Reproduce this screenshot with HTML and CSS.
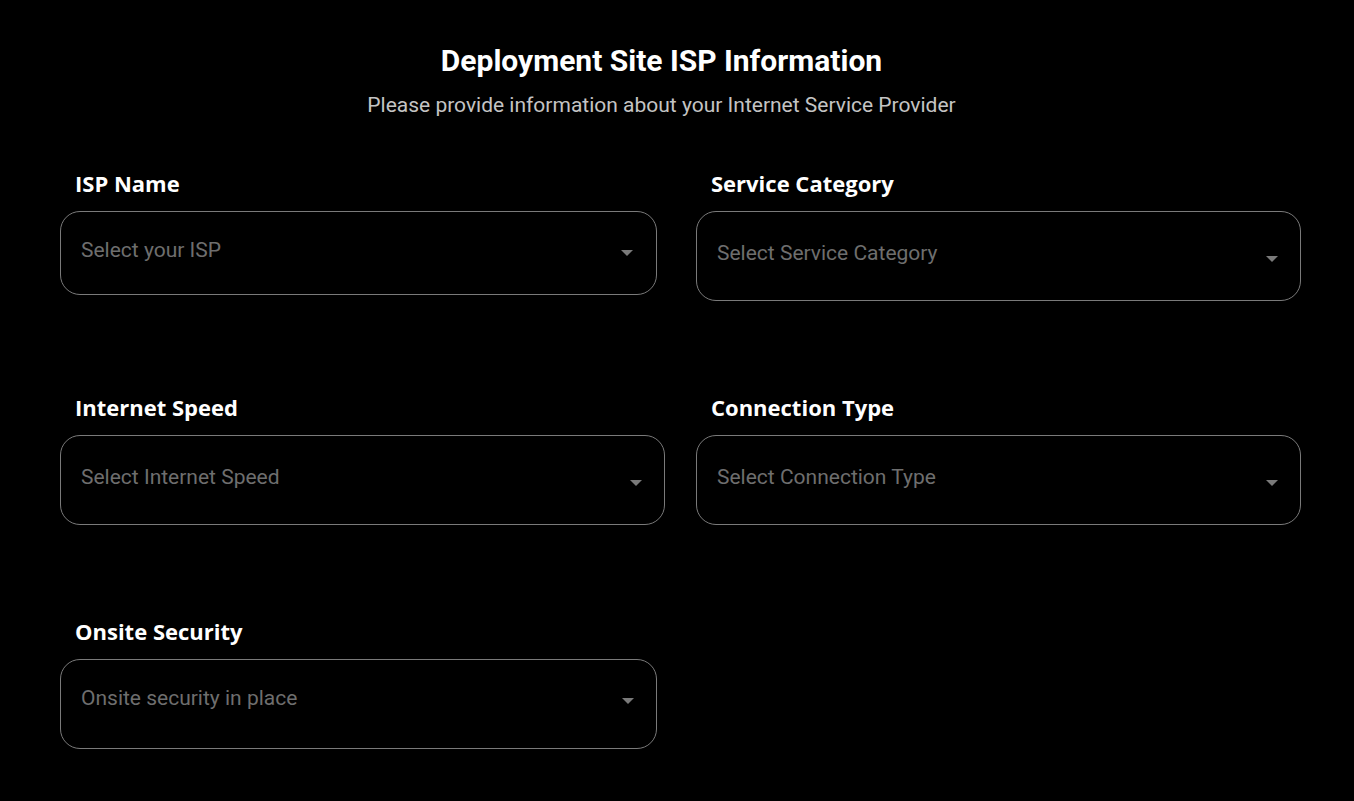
FILE: index.html
```html
<!DOCTYPE html>
<html lang="en">
<head>
<meta charset="utf-8">
<title>Deployment Site ISP Information</title>
<link rel="stylesheet" href="styles.css">
</head>
<body>
<main class="page">
  <header class="header">
    <h1 class="title">Deployment Site ISP Information</h1>
    <p class="subtitle">Please provide information about your Internet Service Provider</p>
  </header>
  <section class="grid">
    <div class="field">
      <label class="label">ISP Name</label>
      <div class="select select--short select--narrow">
        <span class="placeholder">Select your ISP</span>
        <svg class="caret" width="14" height="8" viewBox="0 0 14 8"><path d="M1 1h12L7 7z" fill="#7a7a7a"/></svg>
      </div>
    </div>
    <div class="field">
      <label class="label">Service Category</label>
      <div class="select">
        <span class="placeholder">Select Service Category</span>
        <svg class="caret caret--low" width="14" height="8" viewBox="0 0 14 8"><path d="M1 1h12L7 7z" fill="#7a7a7a"/></svg>
      </div>
    </div>
    <div class="field">
      <label class="label">Internet Speed</label>
      <div class="select">
        <span class="placeholder">Select Internet Speed</span>
        <svg class="caret caret--low" width="14" height="8" viewBox="0 0 14 8"><path d="M1 1h12L7 7z" fill="#7a7a7a"/></svg>
      </div>
    </div>
    <div class="field">
      <label class="label">Connection Type</label>
      <div class="select">
        <span class="placeholder">Select Connection Type</span>
        <svg class="caret caret--low" width="14" height="8" viewBox="0 0 14 8"><path d="M1 1h12L7 7z" fill="#7a7a7a"/></svg>
      </div>
    </div>
    <div class="field field--last">
      <label class="label">Onsite Security</label>
      <div class="select select--narrow select--top">
        <span class="placeholder">Onsite security in place</span>
        <svg class="caret" width="14" height="8" viewBox="0 0 14 8"><path d="M1 1h12L7 7z" fill="#7a7a7a"/></svg>
      </div>
    </div>
  </section>
</main>
</body>
</html>
```

FILE: styles.css
```css
html, body {
  margin: 0;
  padding: 0;
  background: #000;
}

.page {
  padding: 43px 53px 0 60px;
  font-family: Roboto, "Liberation Sans", sans-serif;
  color: #fff;
}

.header {
  text-align: center;
  margin: 0 38px 51px 0;
}

.title {
  margin: 0;
  font-size: 30px;
  line-height: 36px;
  font-weight: 700;
  color: #fff;
}

.subtitle {
  margin: 13px 0 0 0;
  font-size: 21px;
  line-height: 26px;
  color: #c4c4c4;
}

.grid {
  display: grid;
  grid-template-columns: 605px 605px;
  column-gap: 31px;
  row-gap: 0;
  align-items: start;
}

.field {
  display: flex;
  flex-direction: column;
  height: 224px;
}

.field--last {
  height: auto;
}

.label {
  padding-left: 15px;
  font-family: "Open Sans", "Noto Sans", sans-serif;
  font-weight: 700;
  font-size: 22px;
  line-height: 30px;
  color: #fff;
  margin: -1px 0 13px 0;
}

.select {
  box-sizing: border-box;
  height: 90px;
  border: 1px solid #7a7a7a;
  border-radius: 20px;
  padding: 0 21px 6px 20px;
  display: flex;
  align-items: center;
  justify-content: space-between;
}

.select--short {
  height: 84px;
  padding-right: 22px;
}

.select--narrow {
  width: 597px;
}

.select--top {
  padding-bottom: 12px;
}

.placeholder {
  font-size: 21px;
  line-height: 26px;
  color: #6e6e6e;
}

.caret {
  flex: none;
  margin-top: 6px;
}

.caret--low {
  margin-top: 12px;
}
```
